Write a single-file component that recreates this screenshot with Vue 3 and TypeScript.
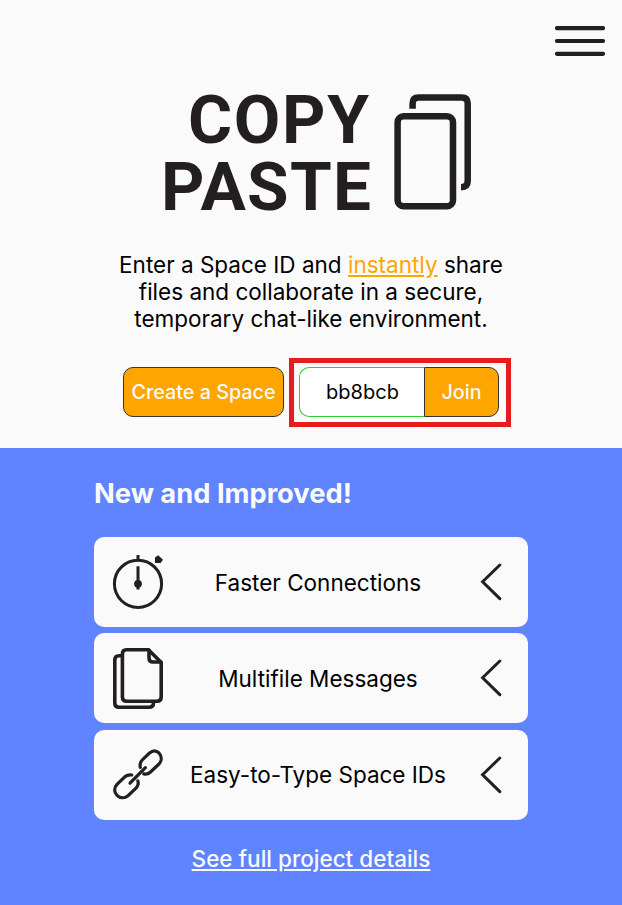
<script setup lang="ts">
import { ref } from 'vue'

interface Feature {
  icon: 'timer' | 'files' | 'link'
  label: string
}

const spaceId = ref<string>('bb8bcb')
const features: Feature[] = [
  { icon: 'timer', label: 'Faster Connections' },
  { icon: 'files', label: 'Multifile Messages' },
  { icon: 'link', label: 'Easy-to-Type Space IDs' },
]
</script>

<template>
  <div class="page">
    <header class="hero">
      <nav class="nav">
        <button class="menu" aria-label="Menu">
          <svg width="50" height="30" viewBox="0 0 50 30">
            <path d="M2 2.2H48M2 15H48M2 27.8H48" />
          </svg>
        </button>
      </nav>

      <svg class="logo" width="312" height="124" viewBox="0 0 312 124">
        <g class="wordmark">
          <text x="26" y="53" textLength="181" lengthAdjust="spacing">COPY</text>
          <text x="-1" y="120" textLength="210" lengthAdjust="spacing">PASTE</text>
        </g>
        <rect x="235.6" y="26.2" width="55.4" height="90" rx="6" />
        <path d="M250.6 18.8V13.5Q250.6 7.5 256.6 7.5H299.7Q305.7 7.5 305.7 13.5V91Q305.7 97.2 299 97.2" />
      </svg>

      <p class="intro">
        Enter a Space ID and <a class="accent">instantly</a> share<br />
        files and collaborate in a secure,<br />
        temporary chat-like environment.
      </p>

      <div class="actions">
        <button class="create">Create a Space</button>
        <div class="highlight">
          <input v-model="spaceId" class="space-id" aria-label="Space ID" />
          <button class="join">Join</button>
        </div>
      </div>
    </header>

    <main class="news">
      <h2 class="title">New and Improved!</h2>
      <section class="cards">
        <article v-for="feature in features" :key="feature.icon" class="card">
          <svg v-if="feature.icon === 'timer'" class="icon timer" width="52" height="64" viewBox="0 0 52 64">
            <circle cx="26" cy="33.8" r="23.6" />
            <path d="M26 5V10M26 16.2V39.5" />
            <circle class="solid" cx="26" cy="33.8" r="3.9" />
            <path class="solid" d="M43 7.4L46.2 5.3L51 9.8L48.6 13H43Z" />
          </svg>
          <svg v-else-if="feature.icon === 'files'" class="icon" width="52" height="64" viewBox="0 0 52 64">
            <path d="M9.5 9.8H7Q2.8 9.8 2.8 14V57Q2.8 61.2 7 61.2H37Q41.5 61.2 41.5 57" />
            <path d="M14.5 3.8H36.5L49.2 16.5V51Q49.2 55.2 45 55.2H14.5Q10.4 55.2 10.4 51V8Q10.4 3.8 14.5 3.8Z" />
            <path d="M37 4.2V12Q37 16 41 16H48.8" />
          </svg>
          <svg v-else class="icon link" width="52" height="64" viewBox="0 0 52 64">
            <path d="M28.3 24.4Q27.3 19.6 30.8 16.4L37.5 10C41 7 44.5 7.5 47 10C50 13.4 50 17.8 47 21L38.5 29Q35.5 31.7 31.8 30.9" />
            <path d="M19.8 32Q15 31.6 12 34.6L5 41.3C1.7 44.8 2 49.5 5 52.3C8 55.3 12.6 55.5 16 52.7L23.5 45.7Q27.3 42 25.8 37.8" />
            <path d="M18 40.2L33.4 24.6" />
          </svg>
          <span class="label">{{ feature.label }}</span>
          <svg class="chevron" width="22" height="38" viewBox="0 0 22 38">
            <path d="M19.8 2L2.6 18.8L19.8 35.6" />
          </svg>
        </article>
      </section>
      <a class="details">See full project details</a>
    </main>
  </div>
</template>

<style>
body {
  background: #fafafa;
}
</style>

<style scoped>
* {
  box-sizing: border-box;
}

.page {
  height: 905px;
  display: flex;
  flex-direction: column;
  overflow: hidden;
  font-family: Inter, "Liberation Sans", sans-serif;
  font-weight: 400;
  font-size: 22.5px;
  line-height: 27px;
  color: #000;
  background: #fafafa;
}

.hero {
  height: 448px;
  display: flex;
  flex-direction: column;
  align-items: center;
}

.nav {
  align-self: stretch;
  display: flex;
  justify-content: flex-end;
  padding: 26px 17px 0 0;
  height: 90px;
}

button {
  font: inherit;
  padding: 0;
}

.menu {
  width: 50px;
  height: 30px;
  border: 0;
  background: none;
}

svg {
  display: block;
  flex: none;
  fill: none;
  stroke: #231f20;
  stroke-linecap: round;
}

.menu svg {
  stroke-width: 4.2;
}

.logo {
  overflow: visible;
  margin-left: 14px;
  stroke-width: 6.5;
  stroke-linecap: butt;
}

.wordmark {
  font-family: Roboto, sans-serif;
  font-size: 67.5px;
  font-weight: 700;
  fill: #231f20;
  stroke: none;
}

.intro {
  margin: 37px 0 0;
  text-align: center;
}

.accent {
  color: #ffa500;
  text-decoration: underline;
}

.actions {
  display: flex;
  align-items: center;
  gap: 5px;
  margin: 26px 0 0 12px;
  font-size: 20px;
}

.create,
.join {
  height: 50px;
  padding-top: 1px;
  border: 1px solid #333;
  background: #ffa500;
  color: #fafafa;
  font-size: 19.8px;
  font-weight: 500;
}

.create {
  position: relative;
  top: -1px;
  width: 161px;
  border-radius: 10px;
}

.highlight {
  display: flex;
  width: 222px;
  height: 69px;
  padding: 4px 7px 5px 5px;
  border: 5px solid #e71c1e;
}

.space-id {
  width: 125px;
  height: 50px;
  padding: 0 0 1px 1px;
  border: 1px solid #32cd32;
  border-right: 0;
  border-radius: 10px 0 0 10px;
  outline: 0;
  background: #fff;
  color: #000;
  font: inherit;
  text-align: center;
}

.join {
  width: 75px;
  border-radius: 0 10px 10px 0;
}

.news {
  flex: 1;
  padding: 29px 94px 0;
  display: flex;
  flex-direction: column;
  background: #6083ff;
  color: #fafafa;
}

.title {
  margin: 0;
  height: 60px;
  font-size: 27.3px;
  font-weight: 700;
  line-height: 33px;
}

.cards {
  display: flex;
  flex-direction: column;
  gap: 6.4px;
}

.card {
  height: 90px;
  display: flex;
  align-items: center;
  padding: 0 26px 0 18px;
  border-radius: 10px;
  background: #fafafa;
  color: #000;
}

.label {
  flex: 1;
  padding-right: 8px;
  text-align: center;
}

.icon {
  stroke-width: 3.6;
}

.link {
  stroke-width: 3.2;
}

.timer {
  stroke-width: 3;
  stroke-linecap: butt;
}

.icon .solid {
  fill: #231f20;
  stroke: none;
}

.chevron {
  stroke-width: 3;
}

.details {
  margin-top: 25px;
  text-align: center;
  font-weight: 500;
  text-decoration: underline;
}
</style>
